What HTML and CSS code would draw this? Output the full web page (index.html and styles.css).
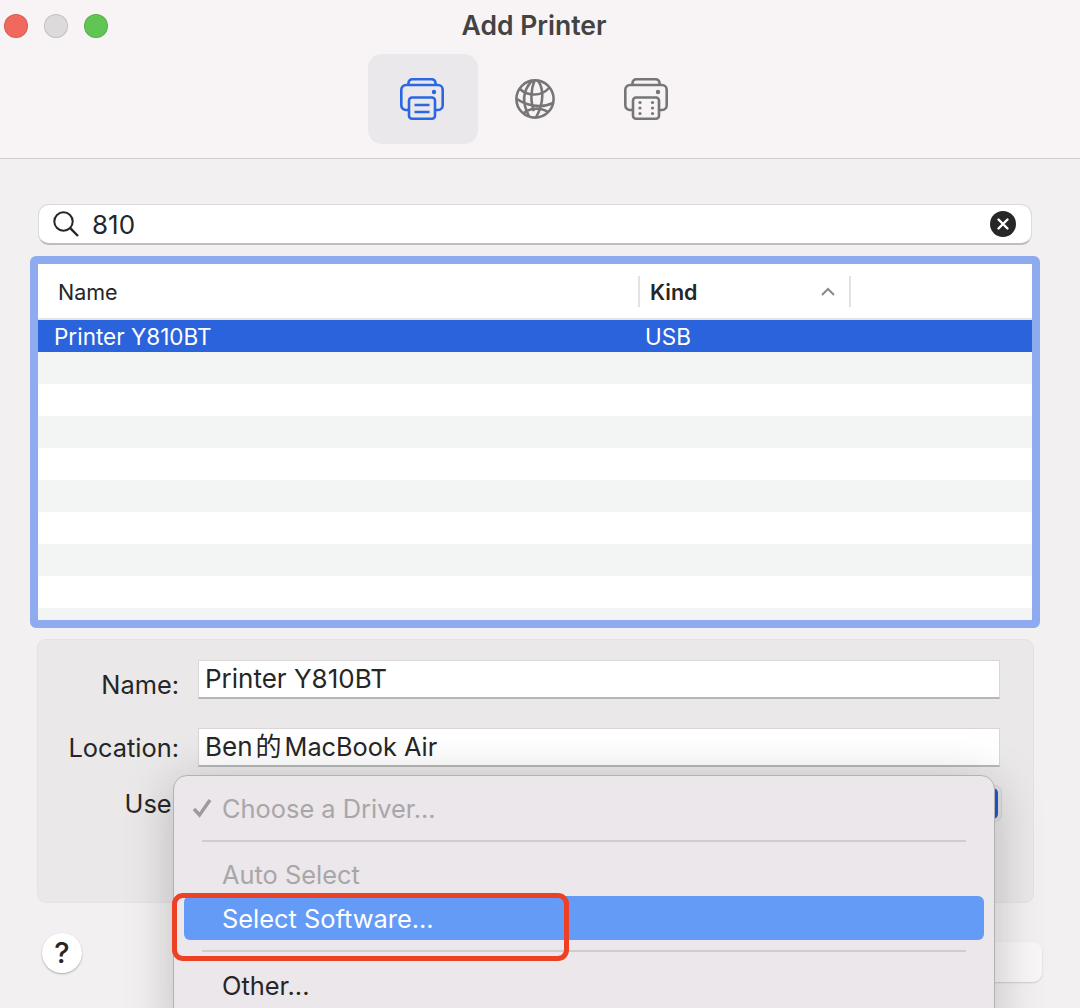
FILE: index.html
```html
<!DOCTYPE html>
<html lang="en">
<head>
<meta charset="utf-8">
<title>Add Printer</title>
<link rel="stylesheet" href="styles.css">
</head>
<body>
<div class="window">
  <header class="titlebar">
    <div class="lights">
      <span class="light red"></span>
      <span class="light grey"></span>
      <span class="light green"></span>
    </div>
    <h1 class="title">Add Printer</h1>
    <nav class="tabs">
      <div class="tab active">
        <svg class="icon blue" width="44" height="42" viewBox="0 0 44 42" fill="none" stroke="currentColor" stroke-width="2.6">
          <path d="M8.5 7V5A3.7 3.7 0 0 1 12.2 1.3H31.8A3.7 3.7 0 0 1 35.5 5V7"/>
          <path d="M9 32H6A4.7 4.7 0 0 1 1.3 27.3V11.7A4.7 4.7 0 0 1 6 7H38A4.7 4.7 0 0 1 42.7 11.7V27.3A4.7 4.7 0 0 1 38 32H35"/>
          <rect x="9" y="19.500" width="26" height="21.200" rx="3"/>
          <path d="M14.500 27H29.500M14.500 34H29.500"/>
          <circle cx="34" cy="14" r="2.200" fill="currentColor" stroke="none"/>
        </svg>
      </div>
      <div class="tab">
        <svg class="icon grey-icon" width="40" height="40" viewBox="0 0 40 40" fill="none" stroke="currentColor" stroke-width="2.600">
          <circle cx="20" cy="20" r="18.600"/>
          <path d="M17 1.800C9 10 6 22 14 37M23 1.800C29 10 29 24 21 38.400M19.500 1.500C16 10 15 22 19 32"/>
          <path d="M5 10C11 16 25 19 34 9M2 20C10 26 26 30 38 24M9 34C14 29 26 28 33 33"/>
        </svg>
      </div>
      <div class="tab">
        <svg class="icon grey-icon" width="44" height="42" viewBox="0 0 44 42" fill="none" stroke="currentColor" stroke-width="2.6">
          <path d="M8.500 7V5A3.700 3.700 0 0 1 12.200 1.300H31.800A3.700 3.700 0 0 1 35.500 5V7"/>
          <path d="M9 32H6A4.700 4.700 0 0 1 1.300 27.300V11.700A4.700 4.700 0 0 1 6 7H38A4.700 4.700 0 0 1 42.700 11.700V27.300A4.700 4.700 0 0 1 38 32H35"/>
          <rect x="9" y="19.500" width="26" height="21.200" rx="3"/>
          <circle cx="34" cy="14" r="2.200" fill="currentColor" stroke="none"/>
          <g fill="currentColor" stroke="none">
            <circle cx="16" cy="24.500" r="1.600"/><circle cx="28.500" cy="24.500" r="1.600"/>
            <circle cx="16" cy="30" r="1.600"/><circle cx="28.500" cy="30" r="1.600"/>
            <circle cx="16" cy="35.500" r="1.600"/><circle cx="28.500" cy="35.500" r="1.600"/>
          </g>
        </svg>
      </div>
    </nav>
  </header>

  <main class="content">
    <div class="search">
      <svg width="28" height="28" viewBox="0 0 28 28" fill="none" stroke="#262626" stroke-width="2">
        <circle cx="11.500" cy="11.500" r="9.200"/>
        <path d="M18.200 18.200L26 26" stroke-width="2.400"/>
      </svg>
      <span class="search-text">810</span>
      <svg class="clear" width="26" height="26" viewBox="0 0 26 26">
        <circle cx="13" cy="13" r="13" fill="#272727"/>
        <path d="M8.500 8.500L17.500 17.500M17.500 8.500L8.500 17.500" stroke="#fff" stroke-width="2.400" stroke-linecap="round"/>
      </svg>
    </div>

    <section class="list">
      <div class="list-head">
        <div class="col-name">Name</div>
        <div class="col-kind">
          <span>Kind</span>
          <svg width="14" height="9" viewBox="0 0 14 9" fill="none" stroke="#8a8a8a" stroke-width="2"><path d="M1 8L7 2L13 8"/></svg>
        </div>
        <div class="col-rest"></div>
      </div>
      <div class="row selected"><span>Printer Y810BT</span><span>USB</span></div>
      <div class="row stripe"></div>
      <div class="row"></div>
      <div class="row stripe"></div>
      <div class="row"></div>
      <div class="row stripe"></div>
      <div class="row"></div>
      <div class="row stripe"></div>
      <div class="row"></div>
      <div class="row stripe short"></div>
    </section>

    <section class="panel">
      <div class="field">
        <label class="label name-label">Name:</label>
        <div class="input">Printer Y810BT</div>
      </div>
      <div class="field second">
        <label class="label">Location:</label>
        <div class="input">Ben<span class="cjk">的</span><span class="machine">MacBook Air</span></div>
      </div>
      <div class="field third">
        <label class="label use-label">Use:</label>
        <div class="select"><span class="select-arrow"></span></div>
      </div>
    </section>

    <footer class="footer">
      <div class="help">?</div>
      <div class="action"></div>
    </footer>
  </main>

  <div class="menu">
    <div class="item disabled first">
      <svg class="check" width="20" height="20" viewBox="0 0 20 20" fill="none" stroke="#9d9a9d" stroke-width="3.400"><path d="M2 11L7.500 17L18 2"/></svg>
      <span>Choose a Driver...</span>
    </div>
    <div class="sep"></div>
    <div class="item disabled auto"><span>Auto Select</span></div>
    <div class="item highlight"><span>Select Software...</span></div>
    <div class="sep"></div>
    <div class="item"><span>Other...</span></div>
  </div>
  <div class="callout"></div>
</div>
</body>
</html>
```
FILE: styles.css
```css
* { box-sizing: border-box; }
html, body { margin: 0; padding: 0; }
body {
  width: 1080px;
  height: 1008px;
  overflow: hidden;
  font-family: Inter, "Noto Sans CJK SC", "Liberation Sans", sans-serif;
  color: #262626;
  background: #f2f0f1;
}
.window { position: relative; width: 1080px; height: 1008px; overflow: hidden; }

.titlebar {
  height: 159px;
  background: #f8f4f6;
  border-bottom: 1px solid #cfcccd;
  padding-top: 11px;
  position: relative;
}
.lights { position: absolute; left: 4px; top: 14px; display: flex; gap: 16px; }
.light { width: 24px; height: 24px; border-radius: 50%; border: 1px solid rgba(0,0,0,.12); }
.red { background: #f1685e; }
.grey { background: #dcdadb; }
.green { background: #61c554; }
.title {
  margin: 0;
  font-size: 26.500px;
  line-height: 28px;
  font-weight: 600;
  color: #434343;
  text-align: center;
  padding-right: 12px;
}
.tabs { display: flex; justify-content: flex-start; gap: 1.500px; margin: 15px 0 0 368px; }
.tab { width: 110px; height: 90px; border-radius: 14px; display: flex; align-items: center; justify-content: center; }
.tab.active { background: #ebe8ec; }
.blue { color: #2b66e3; margin-left: -2px; }
.grey-icon { color: #767676; }

.content { padding: 45px 40px 0 30px; }
.search {
  height: 41px;
  margin: 0 8px;
  background: #fff;
  border: 1px solid #dcdadb;
  border-bottom: 2px solid #bfbdbe;
  border-radius: 11px;
  display: flex;
  align-items: center;
  padding: 0 15px 0 13px;
}
.search-text { font-size: 26px; line-height: 30px; padding-top: 2px; margin-left: 12px; flex: 1; }
.clear { flex: none; }

.list {
  margin-top: 11px;
  height: 372px;
  background: #fff;
  border: 8px solid #8fabef;
  border-radius: 6px;
  overflow: hidden;
}
.list-head {
  height: 56px;
  border-bottom: 2px solid #e4e4e4;
  display: grid;
  grid-template-columns: 600px 213px 1fr;
  align-items: center;
  font-size: 21.500px;
}
.col-name { padding-left: 20px; padding-top: 1px; }
.col-kind {
  height: 31px;
  border-left: 2px solid #e2e2e2;
  border-right: 2px solid #e2e2e2;
  padding: 1px 14px 0 10px;
  display: flex;
  align-items: center;
  justify-content: space-between;
  font-weight: 600;
}
.row {
  height: 32px;
  display: grid;
  grid-template-columns: 591px 1fr;
  align-items: center;
  padding-left: 16px;
  font-size: 22.500px;
}
.selected { background: #2b63dc; color: #fff; }
.stripe { background: #f3f5f5; }
.short { height: 12px; }

.panel {
  margin: 11px 6px 0 7px;
  height: 264px;
  background: #eae8e9;
  border: 1px solid #e4e2e3;
  border-radius: 9px;
  padding: 20px 33px 0 0;
}
.field { display: grid; grid-template-columns: 141px 1fr; column-gap: 19px; }
.second { margin-top: 29px; }
.third { margin-top: 18px; }
.label { font-size: 25.400px; text-align: right; height: 37px; line-height: 39px; }
.name-label { line-height: 49px; }
.use-label { line-height: 37px; }
.input {
  height: 39px;
  background: #fff;
  border: 1px solid #d8d6d7;
  border-bottom: 2px solid #b8b6b7;
  padding-left: 6px;
  font-size: 26px;
  line-height: 36px;
}
.cjk { margin: 0 3px 0 3px; }
.machine { font-size: 25.300px; }
.select {
  height: 37px;
  margin-right: -2px;
  background: #e3e1e2;
  border: 1px solid #d6d4d5;
  border-radius: 7px;
  display: flex;
  justify-content: flex-end;
  padding: 2px 3px;
}
.select-arrow { width: 30px; background: #2159d0; border-radius: 5px; }

.footer { display: flex; justify-content: space-between; align-items: flex-start; margin: 30px -2px 0 12px; }
.help {
  width: 40px;
  height: 40px;
  border-radius: 50%;
  background: #fff;
  box-shadow: 0 1px 2px rgba(0,0,0,.3);
  text-align: center;
  font-size: 29px;
  font-weight: 500;
  line-height: 40px;
}
.action {
  width: 200px;
  height: 40px;
  margin-top: 9px;
  background: #f8f6f7;
  border-radius: 9px;
  box-shadow: 0 1px 2px rgba(0,0,0,.15);
}

.menu {
  position: absolute;
  left: 173px;
  top: 775px;
  width: 822px;
  height: 260px;
  background: #ebe7ea;
  border: 1px solid #b4b1b3;
  border-radius: 14px;
  padding: 10px 10px 0;
  box-shadow: 0 8px 50px rgba(0,0,0,.22);
  font-size: 25.400px;
  color: #262626;
}
.item { height: 44px; display: flex; align-items: center; padding-left: 38px; border-radius: 6px; position: relative; }
.first { padding-left: 8px; }
.check { width: 20px; margin-right: 10px; }
.disabled { color: #a9a6a9; }
.auto { margin-bottom: -1px; line-height: 42px; }
.highlight { background: #639bf7; color: #fff; }
.sep { height: 2px; margin: 10px 18px 11px; background: #d0cccf; }

.callout {
  position: absolute;
  left: 172px;
  top: 893px;
  width: 397px;
  height: 68px;
  border: 5px solid #ee4025;
  border-radius: 11px;
}
```
